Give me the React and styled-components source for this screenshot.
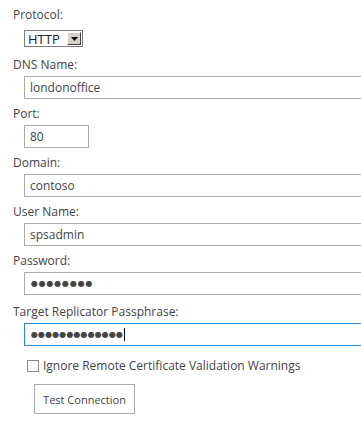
import React from "react";
import styled, { createGlobalStyle } from "styled-components";

const Global = createGlobalStyle`
  html, body { margin: 0; padding: 0; background: #fff; overflow: hidden; }
  body { font-family: "Open Sans", "Noto Sans", sans-serif; }
`;

const Form = styled.div`
  width: 361px;
  height: 424px;
  overflow: hidden;
  padding: 6px 0 0 13px;
  box-sizing: border-box;
  display: flex;
  flex-direction: column;
`;

const Field = styled.div`
  display: flex;
  flex-direction: column;
  margin-bottom: ${(p) => p.$mb ?? 6}px;
`;

const Label = styled.div`
  font-size: 12px;
  line-height: 18px;
  color: #444;
  white-space: nowrap;
`;

const TextBox = styled.div`
  margin: 2px 0 0 11px;
  width: ${(p) => p.$w || "420px"};
  height: 23px;
  box-sizing: border-box;
  border: 1px solid ${(p) => (p.$focus ? "#2a8dd4" : "#ababab")};
  background: #fff;
  display: flex;
  align-items: center;
  padding-left: 5px;
  font-size: 12px;
  color: #444;
  white-space: nowrap;
  flex-shrink: 0;
`;

const Dots = styled.span`
  font-size: 8px;
  letter-spacing: ${(p) => p.$spacing ?? 0.5}px;
  margin-left: 1px;
  color: #444;
  font-family: "DejaVu Sans", sans-serif;
`;

const Caret = styled.span`
  display: inline-block;
  width: 1px;
  height: 13px;
  background: #000;
  margin-left: 1px;
`;

const Select = styled.div`
  margin: 6px 0 0 11px;
  width: 59px;
  height: 17px;
  box-sizing: border-box;
  border: 1px solid #7a7a7a;
  background: #fff;
  display: flex;
  align-items: center;
  justify-content: space-between;
  padding: 0 1px 0 3px;
  font-size: 13px;
  color: #222;
`;

const DropButton = styled.div`
  width: 14px;
  height: 13px;
  box-sizing: border-box;
  background: #d4d0c8;
  border-top: 1px solid #fff;
  border-left: 1px solid #fff;
  border-right: 1px solid #404040;
  border-bottom: 1px solid #404040;
  display: flex;
  align-items: center;
  justify-content: center;
`;

const CheckRow = styled.label`
  display: flex;
  align-items: center;
  margin: 11px 0 0 14px;
  font-size: 12px;
  color: #444;
  white-space: nowrap;
`;

const Box = styled.span`
  width: 12px;
  height: 12px;
  box-sizing: border-box;
  border: 1px solid #8a8a8a;
  background: #fafafa;
  margin-right: 4px;
  flex-shrink: 0;
`;

const Button = styled.button`
  margin: 10px 0 0 21px;
  width: 101px;
  height: 30px;
  box-sizing: border-box;
  border: 1px solid #ababab;
  background: #fff;
  font-family: "Open Sans", "Noto Sans", sans-serif;
  font-size: 11px;
  color: #444;
  padding: 0;
  align-self: flex-start;
`;

export default function App() {
  return (
    <>
      <Global />
      <Form>
        <Field $mb={9}>
          <Label>Protocol:</Label>
          <Select>
            <span>HTTP</span>
            <DropButton>
              <svg width="7" height="4" viewBox="0 0 7 4">
                <path d="M0 0 H7 L3.5 4 Z" fill="#000" />
              </svg>
            </DropButton>
          </Select>
        </Field>
        <Field>
          <Label>DNS Name:</Label>
          <TextBox>londonoffice</TextBox>
        </Field>
        <Field>
          <Label>Port:</Label>
          <TextBox $w="65px">80</TextBox>
        </Field>
        <Field>
          <Label>Domain:</Label>
          <TextBox>contoso</TextBox>
        </Field>
        <Field>
          <Label>User Name:</Label>
          <TextBox>spsadmin</TextBox>
        </Field>
        <Field $mb={8}>
          <Label>Password:</Label>
          <TextBox>
            <Dots $spacing={0.8}>●●●●●●●●</Dots>
          </TextBox>
        </Field>
        <Field $mb={0}>
          <Label>Target Replicator Passphrase:</Label>
          <TextBox $focus>
            <Dots $spacing={0.1}>●●●●●●●●●●●●●</Dots>
            <Caret />
          </TextBox>
        </Field>
        <CheckRow>
          <Box />
          Ignore Remote Certificate Validation Warnings
        </CheckRow>
        <Button>Test Connection</Button>
      </Form>
    </>
  );
}
